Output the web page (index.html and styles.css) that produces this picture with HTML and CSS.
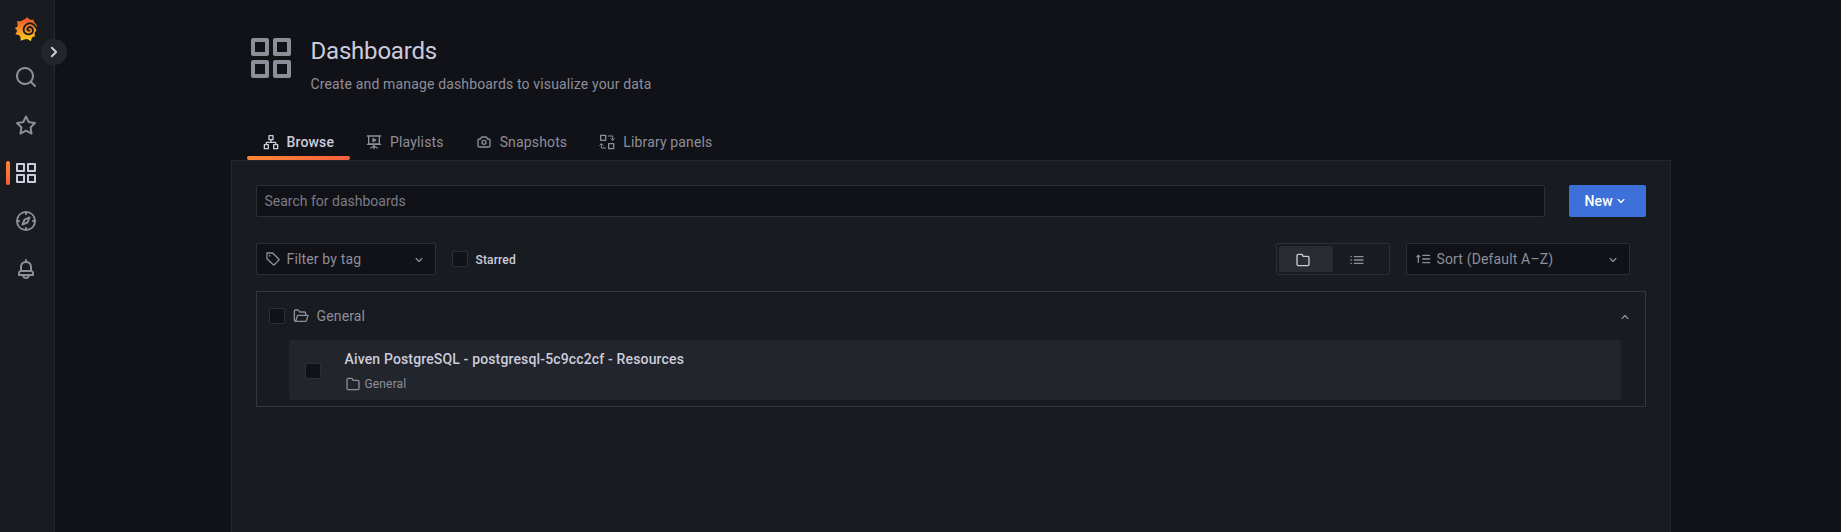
FILE: index.html
```html
<!DOCTYPE html>
<html lang="en">
<head>
<meta charset="utf-8">
<title>Dashboards</title>
<link rel="stylesheet" href="styles.css">
</head>
<body>
<svg class="defs" width="0" height="0" aria-hidden="true">
  <symbol id="apps" viewBox="0 0 24 24"><path d="M10,13H3a1,1,0,0,0-1,1v7a1,1,0,0,0,1,1h7a1,1,0,0,0,1-1V14A1,1,0,0,0,10,13ZM9,20H4V15H9ZM21,2H14a1,1,0,0,0-1,1v7a1,1,0,0,0,1,1h7a1,1,0,0,0,1-1V3A1,1,0,0,0,21,2ZM20,9H15V4h5Zm1,4H14a1,1,0,0,0-1,1v7a1,1,0,0,0,1,1h7a1,1,0,0,0,1-1V14A1,1,0,0,0,21,13Zm-1,7H15V15h5ZM10,2H3A1,1,0,0,0,2,3v7a1,1,0,0,0,1,1h7a1,1,0,0,0,1-1V3A1,1,0,0,0,10,2ZM9,9H4V4H9Z"/></symbol>
  <symbol id="angle-down" viewBox="0 0 24 24"><path d="M17,9.17a1,1,0,0,0-1.41,0L12,12.71,8.46,9.17a1,1,0,0,0-1.41,0,1,1,0,0,0,0,1.42l4.24,4.24a1,1,0,0,0,1.42,0L17,10.59A1,1,0,0,0,17,9.17Z"/></symbol>
  <symbol id="folder" viewBox="0 0 24 24"><path d="M19,5.5H12.72l-.32-1a3,3,0,0,0-2.84-2H5a3,3,0,0,0-3,3v13a3,3,0,0,0,3,3H19a3,3,0,0,0,3-3V8.5A3,3,0,0,0,19,5.5Zm1,13a1,1,0,0,1-1,1H5a1,1,0,0,1-1-1V5.5a1,1,0,0,1,1-1H9.56a1,1,0,0,1,.95.68l.54,1.64A1,1,0,0,0,12,7.5h7a1,1,0,0,1,1,1Z"/></symbol>
</svg>
<div class="app">
  <nav class="sidebar">
    <a class="nav-item logo">
      <svg width="24" height="26" viewBox="0 0 72 78">
        <defs><linearGradient id="flame" x1="0" y1="1" x2="0" y2="0"><stop offset="0" stop-color="#fcd81f"/><stop offset=".35" stop-color="#fa9e22"/><stop offset="1" stop-color="#f1502a"/></linearGradient></defs>
        <path fill="url(#flame)" d="M40 3Q43 9 49 11L59 11Q58 16 62 20Q68 24 69 33Q70 42 62 51Q61 56 64 61Q57 61 53 66L51 76Q44 70 38 69Q31 69 20 74Q21 66 18 60Q14 56 4 55Q9 50 9 43L2 36Q10 33 11 29L9 15Q17 17 23 14Q33 11 40 3z"/>
        <path class="logo-swirl" d="M71 41C67 37 65 31 60 27C53 21 43 21 36 26C28 32 27 43 32 50C38 57 49 57 55 50C59 43 56 34 48 33C41 33 38 40 42 43C44 45 47 44 48 42"/>
      </svg>
    </a>
    <a class="nav-item"><svg class="icon xl" viewBox="0 0 24 24"><path d="M21.71,20.29,18,16.61A9,9,0,1,0,16.61,18l3.68,3.68a1,1,0,0,0,1.42,0A1,1,0,0,0,21.71,20.29ZM11,18a7,7,0,1,1,7-7A7,7,0,0,1,11,18Z"/></svg></a>
    <a class="nav-item"><svg class="icon xl" viewBox="0 0 24 24"><path d="M22,9.67A1,1,0,0,0,21.14,9l-5.69-.83L12.9,3a1,1,0,0,0-1.8,0L8.55,8.16,2.86,9a1,1,0,0,0-.81.68,1,1,0,0,0,.25,1l4.13,4-1,5.68A1,1,0,0,0,6.9,21.44L12,18.77l5.1,2.67a.93.93,0,0,0,.46.12,1,1,0,0,0,.59-.19,1,1,0,0,0,.4-1l-1-5.68,4.13-4A1,1,0,0,0,22,9.67Zm-6.15,4a1,1,0,0,0-.29.88l.72,4.2-3.76-2a1.06,1.06,0,0,0-.94,0l-3.76,2,.72-4.2a1,1,0,0,0-.29-.88l-3-3,4.21-.61a1,1,0,0,0,.76-.55L12,5.7l1.88,3.82a1,1,0,0,0,.76.55l4.21.61Z"/></svg></a>
    <a class="nav-item current"><svg class="icon xl"><use href="#apps"/></svg></a>
    <a class="nav-item"><svg class="icon xl" viewBox="0 0 24 24"><path d="M12,2A10,10,0,1,0,22,12,10,10,0,0,0,12,2Zm1,17.93V19a1,1,0,0,0-2,0v.93A8,8,0,0,1,4.07,13H5a1,1,0,0,0,0-2H4.07A8,8,0,0,1,11,4.07V5a1,1,0,0,0,2,0V4.07A8,8,0,0,1,19.93,11H19a1,1,0,0,0,0,2h.93A8,8,0,0,1,13,19.93ZM15.14,7.55l-5,2.12a1,1,0,0,0-.52.52l-2.12,5a1,1,0,0,0,.21,1.1,1,1,0,0,0,.7.3.93.93,0,0,0,.4-.09l5-2.12a1,1,0,0,0,.52-.52l2.12-5a1,1,0,0,0-1.31-1.31Zm-2.49,5.1-2.28,1,1-2.28,2.28-1Z"/></svg></a>
    <a class="nav-item"><svg class="icon xl" viewBox="0 0 24 24"><path d="M18,13.18V10a6,6,0,0,0-5-5.91V3a1,1,0,0,0-2,0V4.09A6,6,0,0,0,6,10v3.18A3,3,0,0,0,4,16v2a1,1,0,0,0,1,1H8.14a4,4,0,0,0,7.72,0H19a1,1,0,0,0,1-1V16A3,3,0,0,0,18,13.18ZM8,10a4,4,0,0,1,8,0v3H8Zm4,10a2,2,0,0,1-1.72-1h3.44A2,2,0,0,1,12,20Zm6-3H6V16a1,1,0,0,1,1-1H17a1,1,0,0,1,1,1Z"/></svg></a>
    <span class="toggle"><svg class="icon xl" viewBox="0 0 24 24"><path d="M14.83,11.29,10.59,7.05a1,1,0,0,0-1.42,0,1,1,0,0,0,0,1.41L12.71,12,9.17,15.54a1,1,0,0,0,0,1.41,1,1,0,0,0,.71.29,1,1,0,0,0,.71-.29l4.24-4.24A1,1,0,0,0,14.83,11.29Z"/></svg></span>
  </nav>
  <main class="page">
    <header class="page-header">
      <svg class="icon huge"><use href="#apps"/></svg>
      <div>
        <h1 class="title">Dashboards</h1>
        <div class="subtitle">Create and manage dashboards to visualize your data</div>
      </div>
    </header>
    <div class="tabs">
      <a class="tab active"><svg class="icon line" viewBox="0 0 24 24"><path d="M9 2.5h6v6H9zM2 16h6v6H2zM16 16h6v6h-6zM12 8.500v4M5 16v-3.500h14V16"/></svg>Browse</a>
      <a class="tab"><svg class="icon line" viewBox="0 0 24 24"><path d="M2 3h20M4 3v12h16V3M2 15.500h20M12 15v7M7 21l5-3 5 3M10.500 7v4.500l4-2.200z"/></svg>Playlists</a>
      <a class="tab"><svg class="icon" viewBox="0 0 24 24"><path d="M19,6.500H17.720l-.32-1a3,3,0,0,0-2.840-2H9.440A3,3,0,0,0,6.600,5.550l-.32,1H5a3,3,0,0,0-3,3v8a3,3,0,0,0,3,3H19a3,3,0,0,0,3-3v-8A3,3,0,0,0,19,6.500Zm1,11a1,1,0,0,1-1,1H5a1,1,0,0,1-1-1v-8a1,1,0,0,1,1-1H7a1,1,0,0,0,1-.68l.54-1.640a1,1,0,0,1,.95-.68h5.120a1,1,0,0,1,.95.68l.54,1.640A1,1,0,0,0,17,8.500h2a1,1,0,0,1,1,1Zm-8-9a4,4,0,1,0,4,4A4,4,0,0,0,12,8.500Zm0,6a2,2,0,1,1,2-2A2,2,0,0,1,12,14.500Z"/></svg>Snapshots</a>
      <a class="tab"><svg class="icon line library" viewBox="0 0 24 24"><path d="M2.500 2H10v7.500H2.500zM14.500 14.500H22V22h-7.500z"/><path class="thin" d="M14 3h6.500v6M18 7l2.500 2.500L23 7M10 21H3.500v-6M1 17l2.500-2.500L6 17"/></svg>Library panels</a>
    </div>
    <section class="panel">
      <div class="search-row">
        <div class="field search">Search for dashboards</div>
        <button class="new">New<svg class="icon"><use href="#angle-down"/></svg></button>
      </div>
      <div class="filter-row">
        <div class="field filter"><svg class="icon line" viewBox="0 0 24 24"><path d="M3 3h8.500l9.300 9.300a1 1 0 0 1 0 1.400l-7 7a1 1 0 0 1-1.400 0L3 11.500z"/><path d="M7 6.500v1"/></svg><span class="grow">Filter by tag</span><svg class="icon lowered"><use href="#angle-down"/></svg></div>
        <span class="checkbox"></span><span class="starred">Starred</span>
        <div class="layouts">
          <span class="layout on"><svg class="icon"><use href="#folder"/></svg></span>
          <span class="layout"><svg class="icon line" viewBox="0 0 24 24"><path d="M8 7h13M8 12h13M8 17h13M3 7h.5M3 12h.5M3 17h.5"/></svg></span>
        </div>
        <div class="field sort"><svg class="icon line" viewBox="0 0 24 24"><path d="M5 17V7M3 8.500L5 6.500l2 2M11.500 6.500H22M11.500 12H22M11.500 17.500H22"/></svg><span class="grow">Sort (Default A–Z)</span><svg class="icon lowered"><use href="#angle-down"/></svg></div>
      </div>
      <div class="folder-section">
        <div class="folder-head">
          <span class="checkbox"></span>
          <svg class="icon line" viewBox="0 0 24 24"><path d="M6 20H4a2 2 0 0 1-2-2V5a2 2 0 0 1 2-2h4l2 3h7a2 2 0 0 1 2 2v3M4 20l3-9h15.500l-2.300 7.500a2 2 0 0 1-2 1.500z"/></svg>
          <span class="grow">General</span>
          <svg class="icon flipped lowered"><use href="#angle-down"/></svg>
        </div>
        <div class="result">
          <span class="checkbox"></span>
          <div>
            <div class="result-title">Aiven PostgreSQL - postgresql-5c9cc2cf - Resources</div>
            <div class="result-folder"><svg class="icon"><use href="#folder"/></svg>General</div>
          </div>
        </div>
      </div>
    </section>
  </main>
</div>
</body>
</html>
```
FILE: styles.css
```css
* { box-sizing: border-box; }
body {
  margin: 0;
  background: #111217;
  color: #ccccdc;
  font: 400 14px/22px Roboto, sans-serif;
  letter-spacing: 0.15px;
  overflow: hidden;
}
.defs { position: absolute; }
.app { display: flex; height: 532px; }
.icon { width: 16px; height: 16px; fill: currentColor; flex: none; display: block; }
.icon.xl { width: 24px; height: 24px; }
.icon.huge { width: 48px; height: 48px; color: #8e8e9a; }
.icon.line { fill: none; stroke: currentColor; stroke-width: 2; stroke-linejoin: round; stroke-linecap: round; }
.icon.line .thin { stroke-width: 1.5; }
.icon.flipped { transform: rotate(180deg); }
.icon.lowered { margin-top: 2px; }
.grow { flex: 1; }

.sidebar {
  position: relative;
  width: 55px;
  flex: none;
  padding-top: 5px;
  background: #181b1f;
  border-right: 1px solid #25272c;
}
.nav-item {
  position: relative;
  display: flex;
  align-items: center;
  height: 48px;
  padding-left: 14px;
  color: #8e8e9a;
}
.nav-item.current { color: #ccccdc; }
.nav-item.current::before {
  content: "";
  position: absolute;
  left: 6px;
  top: 12px;
  width: 4px;
  height: 24px;
  border-radius: 2px;
  background: linear-gradient(#ff8833, #f55f3e);
}
.logo-swirl { fill: none; stroke: #181b1f; stroke-width: 5.5; }
.toggle {
  position: absolute;
  left: 42px;
  top: 40px;
  width: 24px;
  height: 24px;
  border-radius: 50%;
  background: #22252b;
  box-shadow: 0 0 0 1px #25272c;
}

.page { display: flex; flex-direction: column; width: 1440px; margin-left: 175.5px; }
.page-header { display: flex; gap: 16px; padding: 34px 16px 0; height: 120px; }
.title { margin: 3px 0 8px; font-size: 24px; line-height: 28px; font-weight: 400; letter-spacing: -0.2px; }
.subtitle { color: #8e8e9a; }
.tabs { display: flex; height: 40px; padding-left: 16px; }
.tab {
  position: relative;
  display: flex;
  align-items: center;
  gap: 8px;
  padding: 4px 16px 0;
  color: #8e8e9a;
}
.tab.active { color: #ccccdc; font-weight: 500; }
.tab.active::after {
  content: "";
  position: absolute;
  inset: auto 0 0 0;
  height: 4px;
  border-radius: 2px;
  background: linear-gradient(90deg, #ff8833, #f55f3e);
}
.panel {
  flex: 1;
  padding: 24px;
  background: #181b1f;
  border: 1px solid #25272c;
  border-bottom: 0;
}
.field {
  display: flex;
  align-items: center;
  height: 32px;
  padding: 0 8px;
  background: #111217;
  border: 1px solid #2d2f35;
  border-radius: 2px;
  color: #8e8e9a;
}
.search-row { display: flex; gap: 24px; margin-bottom: 26px; }
.search { flex: 1; color: #7b7c87; letter-spacing: 0; }
.new {
  display: flex;
  align-items: center;
  width: 77px;
  height: 32px;
  padding: 0 16px;
  border: 0;
  border-radius: 2px;
  background: #3d71d9;
  color: #fff;
  font: inherit;
  font-weight: 500;
  letter-spacing: inherit;
}
.filter-row { display: flex; align-items: center; height: 32px; margin-bottom: 16px; }
.filter { width: 180px; gap: 6px; margin-right: 16px; }
.checkbox {
  width: 16px;
  height: 16px;
  flex: none;
  background: #111217;
  border: 1px solid #2d2f35;
  border-radius: 2px;
}
.starred { margin: 2px 0 0 8px; font-size: 12px; font-weight: 500; }
.layouts {
  display: flex;
  width: 114px;
  height: 32px;
  padding: 2px;
  margin: 0 16px 0 auto;
  border: 1px solid #2d2f35;
  border-radius: 2px;
}
.layout { display: flex; flex: 1; align-items: center; justify-content: center; padding: 2px 6px 0 0; color: #8e8e9a; border-radius: 2px; }
.layout.on { background: #2a2c31; color: #ccccdc; }
.sort { width: 224px; gap: 6px; margin-right: 16px; }
.folder-section { height: 116px; border: 1px solid #36383e; }
.folder-head { display: flex; align-items: center; gap: 8px; height: 48px; padding: 0 12px; color: #8e8e9a; }
.result {
  display: flex;
  align-items: center;
  gap: 24px;
  height: 60px;
  margin: 0 24px 0 32px;
  padding: 2px 0 0 16px;
  background: #22252b;
  border-radius: 2px;
}
.result-title { font-weight: 500; }
.result-folder { display: flex; align-items: center; gap: 4px; margin-top: 3px; color: #8e8e9a; font-size: 12px; }
```
